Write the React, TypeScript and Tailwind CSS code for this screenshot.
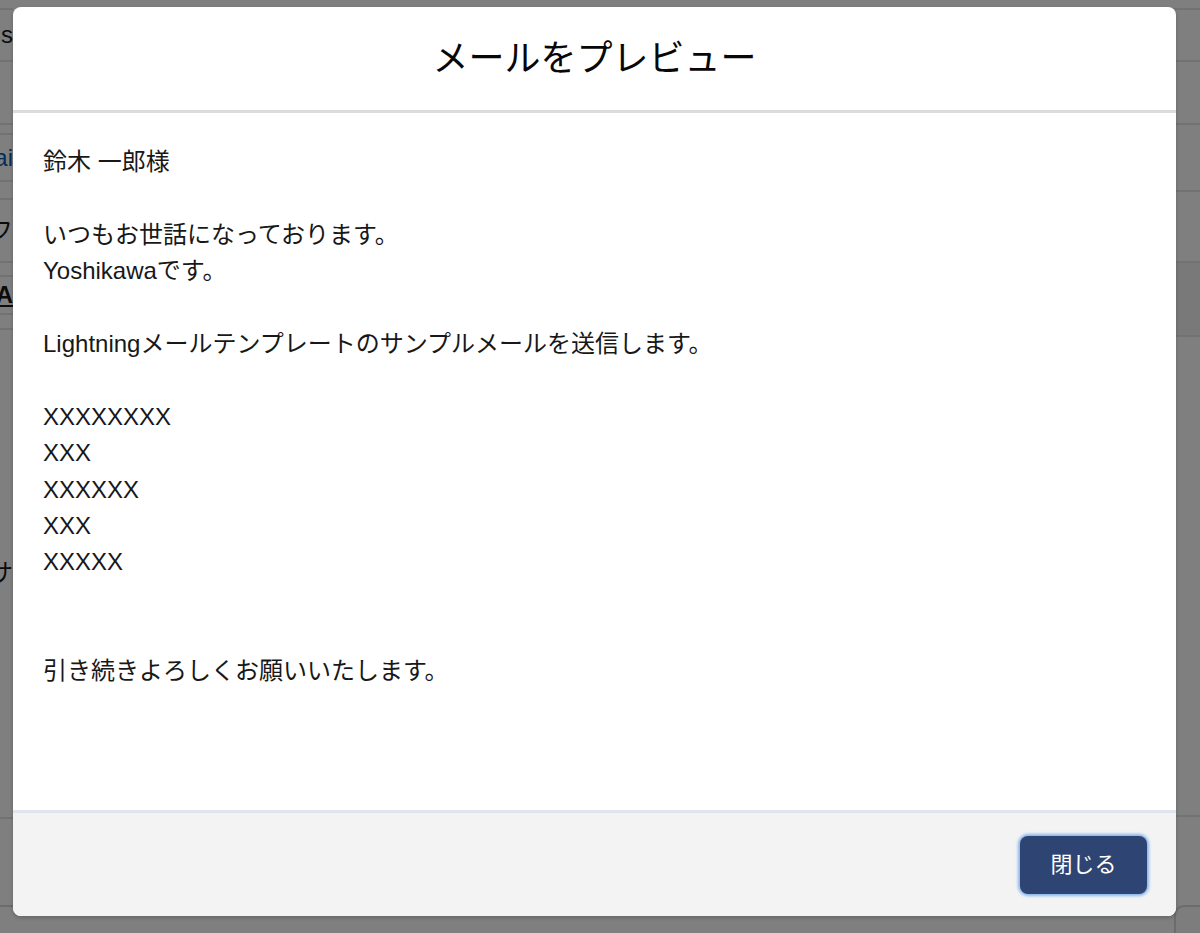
const font = {
  fontFamily: '"Liberation Sans", "Noto Sans CJK JP", sans-serif',
};

// Email body, one entry per line; empty strings are blank lines
const bodyLines = [
  "鈴木 一郎様",
  "",
  "いつもお世話になっております。",
  "Yoshikawaです。",
  "",
  "Lightningメールテンプレートのサンプルメールを送信します。",
  "",
  "XXXXXXXX",
  "XXX",
  "XXXXXX",
  "XXX",
  "XXXXX",
  "",
  "",
  "引き続きよろしくお願いいたします。",
];

function EdgeText({ children, className }: { children: React.ReactNode; className?: string }) {
  return (
    <div className="flex w-[13px] justify-end overflow-hidden whitespace-nowrap">
      <span className={className}>{children}</span>
    </div>
  );
}

// Record page sitting behind the modal backdrop
function RecordPage() {
  return (
    <div className="flex h-full w-full bg-white text-[24px] text-[#181818]" style={font}>
      <div className="flex w-[13px] flex-col">
        <div className="h-[10px] border-b-2 border-[#e5e5e5]" />
        <div className="flex h-[52px] items-center border-b-2 border-[#e5e5e5]">
          <EdgeText>Details</EdgeText>
        </div>
        <div className="h-[63px] border-b-2 border-[#e5e5e5]" />
        <div className="h-[10px] border-b-2 border-[#e5e5e5]" />
        <div className="flex h-[47px] items-center border-b-2 border-[#e5e5e5]">
          <EdgeText className="text-[#0b5cab]">Emai</EdgeText>
        </div>
        <div className="h-[18px] border-b-2 border-[#e5e5e5]" />
        <div className="flex h-[63px] items-center border-b-2 border-[#e5e5e5]">
          <EdgeText>テンプレートフ</EdgeText>
        </div>
        <div className="h-[14px] border-b-2 border-[#e5e5e5]" />
        <div className="flex h-[38px] items-center border-b-2 border-[#e5e5e5]">
          <EdgeText className="font-bold underline">AAA</EdgeText>
        </div>
        <div className="h-[15px] border-b-2 border-[#e5e5e5]" />
        <div className="flex h-[487px] flex-col pt-[225px]">
          <EdgeText>テンプレートサ</EdgeText>
        </div>
        <div className="h-[88px] border-t-2 border-[#e5e5e5]" />
        <div className="flex-1 border-t-2 border-[#d8d8d8]" />
      </div>
      <div className="flex-1" />
      <div className="flex w-[26px] flex-col">
        <div className="h-[10px] border-b-2 border-[#e5e5e5]" />
        <div className="h-[52px] border-b-2 border-[#e5e5e5]" />
        <div className="h-[63px] border-b-2 border-[#e5e5e5]" />
        <div className="h-[67px] border-b-2 border-[#e5e5e5]" />
        <div className="h-[71px] border-b-2 border-[#e5e5e5]" />
        <div className="h-[74px] border-b-2 border-[#e5e5e5] bg-[#f3f3f3]" />
        <div className="h-[480px] border-b-2 border-[#e5e5e5]" />
        <div className="h-[88px]" />
        <div className="flex-1 rounded-tl-[10px] border-l-2 border-t-2 border-[#d8d8d8] bg-[#fafafa]" />
      </div>
    </div>
  );
}

export default function App() {
  return (
    <div className="relative h-[933px] w-[1200px] overflow-hidden">
      <RecordPage />
      {/* backdrop + modal */}
      <div className="absolute inset-0 bg-black/50 pl-[13px] pt-[7px]">
        <section
          className="flex h-[909px] w-[1163px] flex-col overflow-hidden rounded-[8px] bg-white shadow-[0_2px_4px_rgba(0,0,0,0.2)]"
          style={font}
        >
          <header className="flex h-[106px] shrink-0 items-center justify-center border-b-[3px] border-[#dddbda]">
            <h2 className="text-[36px] leading-none text-[#080707]">メールをプレビュー</h2>
          </header>
          <div className="flex-1 px-[30px] pt-[31px] text-[24px] leading-[36.4px] text-[#181818]">
            {bodyLines.map((line, i) => (
              <p key={i} className="h-[36.4px] whitespace-pre">
                {line}
              </p>
            ))}
          </div>
          <footer className="flex h-[106px] shrink-0 items-center justify-end border-t-[3px] border-[#dfe4ee] bg-[#f3f3f3] pr-[29px]">
            <button
              type="button"
              className="flex h-[58px] w-[127px] items-center justify-center rounded-[8px] bg-[#2e4472] text-[22px] text-white shadow-[0_0_3px_2px_#87b5ea]"
            >
              閉じる
            </button>
          </footer>
        </section>
      </div>
    </div>
  );
}
